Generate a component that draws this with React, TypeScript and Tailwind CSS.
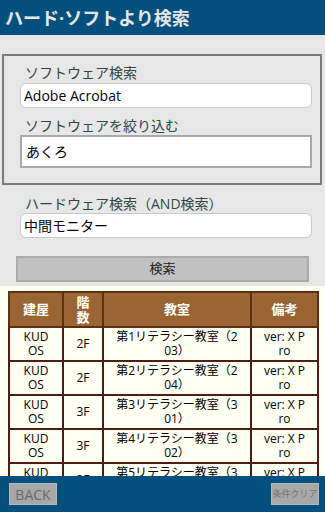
import React from "react";

const rows = [
  { building: "KUDOS", floor: "2F", room: "第1リテラシー教室（203）", note: "ver: X Pro" },
  { building: "KUDOS", floor: "2F", room: "第2リテラシー教室（204）", note: "ver: X Pro" },
  { building: "KUDOS", floor: "3F", room: "第3リテラシー教室（301）", note: "ver: X Pro" },
  { building: "KUDOS", floor: "3F", room: "第4リテラシー教室（302）", note: "ver: X Pro" },
  { building: "KUDOS", floor: "3F", room: "第5リテラシー教室（303）", note: "ver: X Pro" },
];

const font = "font-['Open_Sans','Noto_Sans_CJK_JP',sans-serif]";

function Label({ children }: { children: React.ReactNode }) {
  return <p className="ml-[5px] text-[14px] leading-[18px] text-[#2f4646]">{children}</p>;
}

export default function App() {
  return (
    <div className={`w-[325px] h-[512px] flex flex-col overflow-hidden ${font}`}>
      {/* Title bar */}
      <header className="h-[35px] shrink-0 bg-[#02507e] flex items-center pl-[5px]">
        <h1 className="text-[18px] font-bold text-[#e6e6e6] leading-none">ハード·ソフトより検索</h1>
      </header>

      <main className="flex-1 overflow-hidden">
        {/* Search form */}
        <section className="bg-[#e7e7e7] pt-[19px] pb-[4px]">
          <div className="ml-[2px] w-[320px] border-2 border-[#7a7a7a] pt-[8px] pb-[15px] pl-[16px] pr-[8px]">
            <Label>ソフトウェア検索</Label>
            <div className="mt-[1px] h-[25px] bg-white border border-[#c9c9c9] rounded-[6px] flex items-center pl-[3px] text-[14px] text-black">
              Adobe Acrobat
            </div>
            <div className="mt-[9px]">
              <Label>ソフトウェアを絞り込む</Label>
            </div>
            <div className="h-[33px] bg-white border-2 border-[#a9a9a9] flex items-center pl-[4px] text-[14px] text-black">
              あくろ
            </div>
          </div>

          <div className="mt-[10px] pl-[20px] pr-[13px]">
            <Label>ハードウェア検索（AND検索）</Label>
            <div className="h-[25px] bg-white border border-[#c9c9c9] rounded-[6px] flex items-center pl-[3px] text-[14px] text-black">
              中間モニター
            </div>
          </div>

          <div className="mt-[18px] ml-[16px] w-[293px] h-[26px] bg-[#c1c1c1] border-2 border-[#ababab] flex items-center justify-center text-[13px] text-[#222]">
            検索
          </div>
        </section>

        {/* Results */}
        <section className="bg-[#fdfdf0] pt-[5px] pl-[8px]">
          <table className="w-[309px] table-fixed border-collapse border-2 border-[#3f2614] text-[12px] text-black">
            <colgroup>
              <col className="w-[54px]" />
              <col className="w-[40px]" />
              <col className="w-[148px]" />
              <col className="w-[67px]" />
            </colgroup>
            <thead>
              <tr className="h-[35px] bg-[#9a6533] text-white font-bold text-[13px]">
                <th className="border-2 border-[#5a3012] px-[10px] leading-[15px]">建屋</th>
                <th className="border-2 border-[#5a3012] px-[10px] leading-[15px] break-all">階数</th>
                <th className="border-2 border-[#5a3012] px-[10px] leading-[15px]">教室</th>
                <th className="border-2 border-[#5a3012] px-[10px] leading-[15px]">備考</th>
              </tr>
            </thead>
            <tbody>
              {rows.map((r, i) => (
                <tr key={i} className="h-[34px] bg-[#fffff3] text-center">
                  <td className="border-2 border-[#4e1e10] px-[10px] leading-[14px] break-all">{r.building}</td>
                  <td className="border-2 border-[#4e1e10] px-[10px] leading-[14px]">{r.floor}</td>
                  <td className="border-2 border-[#4e1e10] px-[10px] leading-[14px] break-all">{r.room}</td>
                  <td className="border-2 border-[#4e1e10] px-[10px] leading-[14px] break-all">{r.note}</td>
                </tr>
              ))}
            </tbody>
          </table>
        </section>
      </main>

      {/* Bottom bar */}
      <footer className="h-[36px] shrink-0 bg-[#02507e] flex items-center justify-between pl-[9px] pr-[6px]">
        <button className="w-[48px] h-[22px] bg-[#a8a8a8] border border-[#b8b8b8] flex items-center justify-center text-[14px] text-[#6a6a6a]">
          BACK
        </button>
        <button className="w-[48px] h-[22px] bg-[#a8a8a8] border border-[#b8b8b8] flex items-center justify-center text-[9px] text-[#747474]">
          条件クリア
        </button>
      </footer>
    </div>
  );
}
